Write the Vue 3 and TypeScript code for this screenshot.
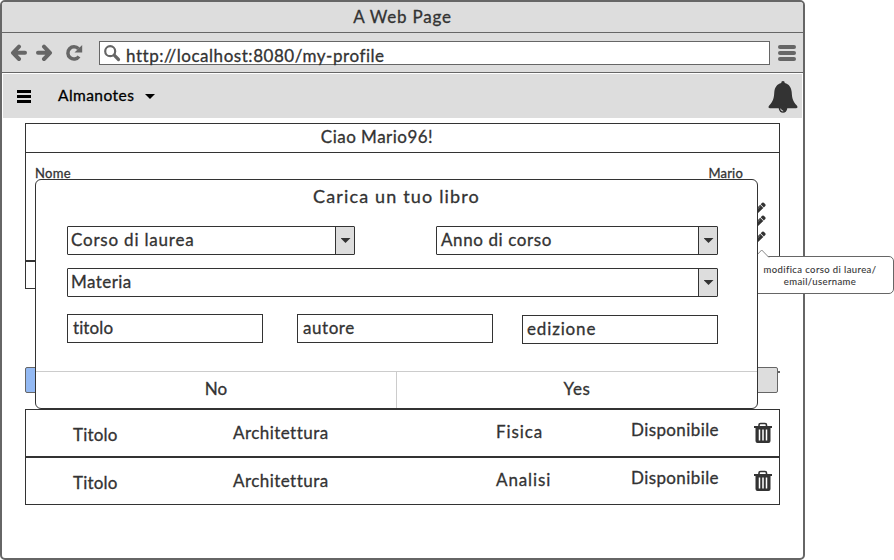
<script setup lang="ts">
interface Book {
  title: string
  course: string
  subject: string
  status: string
}

const books: Book[] = [
  { title: 'Titolo', course: 'Architettura', subject: 'Fisica', status: 'Disponibile' },
  { title: 'Titolo', course: 'Architettura', subject: 'Analisi', status: 'Disponibile' },
]
const pencils: number[] = [1, 2, 3]
</script>

<template>
  <div class="stage">
    <main class="browser">
      <header class="titlebar"><span class="t-page">A Web Page</span></header>
      <div class="toolbar">
        <svg class="nav" viewBox="0 0 74 18" width="74" height="18">
          <path d="M9 2.600 3 8.800 9 15M3.500 8.800H15" class="arrow" />
          <path d="M34 2.600 40 8.800 34 15M39.500 8.800H28" class="arrow" />
          <path d="M69 12.400A6.100 6.100 0 1 1 68.500 4.800" class="reload" />
          <path d="M72.200 1V8.500H64.500Z" class="solid" />
        </svg>
        <div class="address">
          <svg viewBox="0 0 18 18" width="18" height="18">
            <circle cx="6.200" cy="6.200" r="5" class="lens" />
            <path d="M10.200 10.200 14.500 14.500" class="handle" />
          </svg>
          <span class="t-url">http://localhost:8080/my-profile</span>
        </div>
        <div class="burger"><i></i><i></i><i></i></div>
      </div>

      <nav class="appbar">
        <div class="menu"><i></i><i></i><i></i></div>
        <span class="t-brand">Almanotes</span>
        <i class="caret black"></i>
        <svg class="bell" viewBox="0 0 30 34" width="30" height="34">
          <path d="M15 1C13.800 1 13.200 1.800 13.300 2.900C9 4 6.700 7.200 6.300 12C5.900 18.500 5.200 21 1.200 25.500C0 27.100.4 28.300 2 28.300H28C29.600 28.300 30 27.100 28.800 25.500C24.800 21 24.100 18.500 23.700 12C23.300 7.200 21 4 16.700 2.900C16.800 1.800 16.200 1 15 1Z" />
          <circle cx="15" cy="28.500" r="4.200" />
          <path d="M12.700 28.700A2.400 2.400 0 0 0 15.200 31" class="shine" />
        </svg>
      </nav>

      <section class="profile">
        <h1 class="greeting"><span class="t-greet">Ciao Mario96!</span></h1>
        <div class="details">
          <div class="name-row"><span class="t-name">Nome</span><span class="t-value">Mario</span></div>
          <div class="pencils">
            <svg v-for="p in pencils" :key="p" viewBox="0 0 14 14" width="14" height="14">
              <path d="M1 13 2 9 8.200 2.800 11.300 5.900 5 12ZM8.700 2.300 10.200.8Q11 .1 11.800.8L13.300 2.300Q14 3.100 13.300 3.900L11.800 5.400Z" />
              <path d="M5 7.500 8.400 4.200" class="shine" />
            </svg>
          </div>
        </div>
        <div class="blank"></div>
      </section>

      <div class="tabs"><div class="tab active"></div><div class="tab"></div><i class="tick"></i></div>

      <section class="books">
        <article v-for="(book, i) in books" :key="i" class="book">
          <span class="c-title">{{ book.title }}</span>
          <span class="c-course">{{ book.course }}</span>
          <span class="c-subject">{{ book.subject }}</span>
          <span class="c-status">{{ book.status }}</span>
          <svg class="trash" viewBox="0 0 20 22" width="20" height="22">
            <path d="M6 4V3Q6 1.500 7.500 1.500H12Q13.500 1.500 13.500 3V4" class="grip" />
            <path d="M1 4H19V6H17.500V19Q17.500 21 15.500 21H4.500Q2.500 21 2.500 19V6H1Z" />
            <path d="M6.500 7.500V18.500M10 7.500V18.500M13.500 7.500V18.500" class="slots" />
          </svg>
        </article>
      </section>
    </main>

    <aside class="tooltip">
      <svg class="pointer" viewBox="0 0 16 9" width="16" height="9"><path d="M.5 8.500 7.700 1 15 8.500" /></svg>
      <span class="tip-one">modifica corso di laurea/</span>
      <span class="tip-two">email/username</span>
    </aside>

    <section class="modal">
      <h2><span class="t-modal">Carica un tuo libro</span></h2>
      <div class="form">
        <div class="line">
          <div class="select course"><span class="s-course">Corso di laurea</span><b><i class="caret"></i></b></div>
          <div class="select year"><span class="s-year">Anno di corso</span><b><i class="caret"></i></b></div>
        </div>
        <div class="select"><span class="s-subject">Materia</span><b><i class="caret"></i></b></div>
        <div class="line inputs">
          <div class="input"><span class="i-title">titolo</span></div>
          <div class="input"><span class="i-author">autore</span></div>
          <div class="input low"><span class="i-edition">edizione</span></div>
        </div>
      </div>
      <footer>
        <div><span class="t-no">No</span></div>
        <div><span class="t-yes">Yes</span></div>
      </footer>
    </section>
  </div>
</template>

<style>
body { margin: 0; background: #fff; }
</style>

<style scoped>
* { box-sizing: border-box; }
.stage {
  position: relative;
  width: 894px;
  height: 560px;
  overflow: hidden;
  color: #333;
  font: 17px/26px Lato, "Open Sans", sans-serif;
  font-variant-ligatures: none;
}
span { white-space: nowrap; -webkit-text-stroke: 0.3px currentColor; }
svg { display: block; flex: none; fill: #333; }
h1, h2 { margin: 0; font: inherit; }
.browser {
  width: 805px;
  height: 560px;
  border: 2px solid #666;
  border-radius: 5px;
  background: #fff;
  overflow: hidden;
}
.titlebar {
  height: 31px;
  border-bottom: 1px solid #666;
  background: #ddd;
  text-align: center;
  line-height: 29px;
}
.toolbar {
  display: flex;
  height: 40px;
  padding: 8px 6px 0 8px;
  border-bottom: 1px solid #666;
  background: #ddd;
}
.nav { margin-top: 3px; }
.arrow { fill: none; stroke: #666; stroke-width: 4; stroke-linecap: round; stroke-linejoin: round; }
.reload { fill: none; stroke: #666; stroke-width: 3.5; }
.solid { fill: #666; }
.address {
  display: flex;
  width: 671px;
  height: 24px;
  margin-left: 15px;
  padding-left: 4px;
  border: 1px solid #666;
  background: #fff;
}
.address svg { margin-top: 3px; }
.address span { margin: 1px 0 0 4px; line-height: 26px; }
.lens { fill: none; stroke: #666; stroke-width: 2.200; }
.handle { stroke: #666; stroke-width: 3.200; stroke-linecap: round; }
.burger { display: grid; gap: 2px; width: 18px; height: 16px; margin: 4px 0 0 8px; }
.burger i { height: 4px; border-radius: 2px; background: #666; }
.appbar {
  display: flex;
  height: 44px;
  margin: 1px 1px 0;
  padding-left: 14px;
  background: #ddd;
  color: #000;
}
.menu { display: grid; gap: 2px; width: 14px; height: 13px; margin-top: 16px; align-content: start; }
.menu i { height: 3px; background: #000; }
.appbar .t-brand { width: 87px; margin-left: 27px; font-size: 15.500px; line-height: 43px; }
.caret { display: block; width: 10px; height: 5px; background: #333; clip-path: polygon(0 0, 100% 0, 50% 100%); }
.appbar .caret { margin-top: 20px; background: #000; }
.bell { margin: 6px 4px 0 auto; }
.shine { fill: none; stroke: #ddd; stroke-width: 1; }
.profile { width: 755px; margin: 5px 0 0 23px; border: 1px solid #333; }
.greeting { height: 29px; padding-right: 51px; border-bottom: 1px solid #333; text-align: center; line-height: 26px; }
.details { height: 109px; padding: 11px 0 0 9px; border-bottom: 2px solid #333; font-size: 13px; }
.name-row { display: flex; justify-content: space-between; width: 708px; height: 19px; line-height: 19px; }
.pencils { display: grid; grid-template-rows: 13px 16px 14px; margin: 19px 0 0 717px; }
.pencils .shine { stroke: #888; stroke-width: 0.800; }
.blank { height: 26px; }
.tabs { display: flex; width: 755px; height: 26px; margin: 78px 0 0 23px; }
.tab { width: 376px; border: 1px solid #666; border-radius: 2px; background: #ddd; }
.tab.active { width: 377px; background: #93b9f3; }
.tick { width: 2px; height: 2px; margin-top: 4px; background: #666; }
.books { width: 755px; margin: 16px 0 0 23px; }
.book {
  display: grid;
  grid-template-columns: 160px 263px 135px 122px 20px;
  height: 48px;
  padding-left: 47px;
  border: 1px solid #333;
}
.c-title { padding-top: 12px; }
.c-course { padding-top: 10px; }
.c-subject { padding-top: 9px; }
.c-status { padding-top: 7px; }
.trash { margin-top: 12px; }
.grip { fill: none; stroke: #333; stroke-width: 1.600; }
.slots { fill: none; stroke: #fff; stroke-width: 1.500; }
.tooltip {
  position: absolute;
  left: 746px;
  top: 256px;
  display: flex;
  flex-direction: column;
  align-items: center;
  width: 148px;
  height: 38px;
  padding-top: 7px;
  border: 1px solid #666;
  border-radius: 5px;
  background: #fff;
  font-size: 9.500px;
  line-height: 12px;
}
.tooltip span { -webkit-text-stroke-width: 0.100px; }
.pointer { position: absolute; left: 7px; top: -8px; fill: #fff; stroke: #888; }
.modal {
  position: absolute;
  left: 35px;
  top: 179px;
  width: 723px;
  height: 230px;
  border: 1px solid #333;
  border-radius: 6px;
  background: #fff;
}
.modal h2 { height: 46px; text-align: center; font-size: 18px; line-height: 33px; }
.form { width: 651px; height: 145px; margin-left: 31px; }
.line { display: flex; justify-content: space-between; margin-bottom: 13px; }
.select { display: flex; justify-content: space-between; height: 29px; padding-left: 3px; border: 1px solid #333; border-radius: 1px; }
.course { width: 288px; }
.year { width: 282px; padding-left: 4px; }
.select b { display: flex; align-items: center; justify-content: center; width: 19px; padding-left: 1px; border-left: 1px solid #333; background: #ddd; }
.line.inputs { justify-content: flex-start; margin-top: 17px; }
.input { width: 196px; height: 29px; margin-right: 34px; padding-left: 5px; border: 1px solid #333; }
.input.low { margin: 1px 0 0 -5px; padding-left: 4px; }
footer { display: flex; height: 37px; border-top: 1px solid #ccc; text-align: center; line-height: 33px; }
footer div { width: 361px; border-right: 1px solid #ccc; }
footer div:last-child { width: 360px; border: 0; }

.t-page { letter-spacing: 0.8px; }
.t-url { letter-spacing: 0.540px; }
.t-brand { letter-spacing: 0.450px; }
.t-greet { letter-spacing: 0.480px; }
.t-name { letter-spacing: 0.300px; }
.t-value { letter-spacing: 0.200px; }
.t-modal { letter-spacing: 1.150px; }
.s-course { letter-spacing: 0.800px; }
.s-year { letter-spacing: 0.600px; }
.s-subject { letter-spacing: 0.450px; }
.i-title { letter-spacing: 0.100px; }
.i-author { padding-left: 0; letter-spacing: 0.550px; }
.i-edition { letter-spacing: 0.850px; }
.t-yes { letter-spacing: 0.600px; }
.c-title { letter-spacing: 0.200px; }
.c-course { letter-spacing: 0.450px; }
.c-subject { letter-spacing: 0.900px; }
.c-status { letter-spacing: 0.400px; }
.tip-one, .tip-two { letter-spacing: 0.400px; }
</style>
